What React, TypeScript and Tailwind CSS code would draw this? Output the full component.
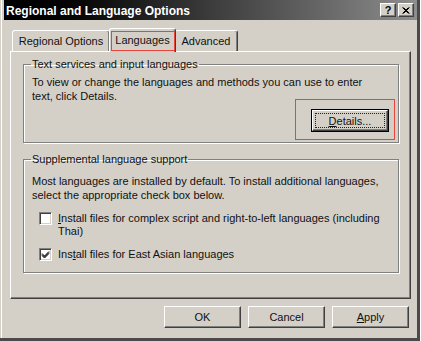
import React from 'react';

// classic 3D edges
const raised =
  'border border-t-white border-l-white border-r-[#404040] border-b-[#404040] shadow-[inset_-1px_-1px_0_#808080]';
const etched = 'border border-[#808080] shadow-[1px_1px_0_#ffffff,inset_1px_1px_0_#ffffff]';

function PushButton({ children }: { children: React.ReactNode }) {
  return (
    <div className={`w-[77px] h-[22px] flex items-center justify-center bg-[#d4d0c8] ${raised}`}>
      {children}
    </div>
  );
}

function Checkbox({ checked }: { checked: boolean }) {
  return (
    <div className="w-[13px] h-[13px] shrink-0 bg-white border border-t-[#808080] border-l-[#808080] border-r-white border-b-white shadow-[inset_1px_1px_0_#404040,inset_-1px_-1px_0_#d4d0c8] flex items-center justify-center">
      {checked && (
        <svg width="9" height="9" viewBox="0 0 9 9">
          <path d="M1 3.5 L3.5 6 L8 1.5 M1 4.5 L3.5 7 L8 2.5 M1 5.5 L3.5 8 L8 3.5" stroke="#000" strokeWidth="1" fill="none" />
        </svg>
      )}
    </div>
  );
}

function TitleButton({ children }: { children: React.ReactNode }) {
  return (
    <div className={`w-[16px] h-[14px] flex items-center justify-center bg-[#d4d0c8] ${raised}`}>
      {children}
    </div>
  );
}

export default function App() {
  return (
    <div className="w-[421px] h-[341px] bg-white font-['Liberation_Sans',Arial,sans-serif] text-[11px] leading-[14px] text-[#111]">
      <div className="w-[420px] h-[341px] bg-[#d4d0c8] flex flex-col pl-[4px] border-r-[3px] border-r-[#4a4a4a] border-b-[3px] border-b-[#4a4a4a] shadow-[inset_1px_0_0_#d4d0c8,inset_2px_0_0_#ffffff]">
        {/* title bar */}
        <div className="h-[20px] shrink-0 flex items-center pl-[2px] pr-[3px] bg-gradient-to-r from-black via-[#3c3c3c] to-[#8e8e8e]">
          <span className="flex-1 text-white font-bold text-[12px] leading-[14px] pt-[1px]">
            Regional and Language Options
          </span>
          <div className="flex gap-[2px]">
            <TitleButton>
              <span className="font-bold text-[11px] leading-none text-black">?</span>
            </TitleButton>
            <TitleButton>
              <svg width="8" height="7" viewBox="0 0 8 7">
                <path d="M0.5 0.5 L6.5 6.5 M1.5 0.5 L7.5 6.5 M6.5 0.5 L0.5 6.5 M7.5 0.5 L1.5 6.5" stroke="#000" strokeWidth="1" />
              </svg>
            </TitleButton>
          </div>
        </div>

        <div className="flex-1 flex flex-col pt-[8px] pl-[6px] pr-[6px]">
          {/* tabs */}
          <div className="flex items-end pl-[2px] h-[23px]">
            <div className="w-[98px] h-[21px] flex items-center justify-center border-t border-l border-t-white border-l-white border-r border-r-[#404040] rounded-t-[3px] shadow-[inset_-1px_0_0_#808080]">
              Regional Options
            </div>
            <div className="relative z-10 w-[67px] h-[24px] -mx-[1px] -mb-[1px] bg-[#d4d0c8] flex items-center justify-center border-t border-l border-t-white border-l-white border-r border-r-[#404040] rounded-t-[3px] shadow-[inset_-1px_0_0_#808080] pb-[2px]">
              Languages
              <span className="absolute top-[2px] left-[1px] right-0 bottom-[1px] border-[1.5px] border-[#e8453c]" />
            </div>
            <div className="w-[63px] h-[21px] flex items-center justify-center border-t border-t-white border-r border-r-[#404040] rounded-t-[3px] shadow-[inset_-1px_0_0_#808080]">
              Advanced
            </div>
          </div>

          {/* panel */}
          <div className={`h-[248px] flex flex-col pt-[6px] pl-[12px] pr-[11px] ${raised}`}>
            <fieldset className={`flex flex-col pl-[8px] pr-[9px] pb-[10px] ${etched}`}>
              <legend className="-ml-[1px] px-[1px] leading-[13px]">Text services and input languages</legend>
              <p className="mt-[4px] whitespace-nowrap">
                To view or change the languages and methods you can use to enter
                <br />
                text, click Details.
              </p>
              <div className="self-end relative mt-[6px]">
                <div className="w-[78px] h-[23px] border border-black">
                  <div className={`h-full p-[2px] bg-[#d4d0c8] ${raised}`}>
                    <div className="h-full flex items-center justify-center border border-dotted border-[#222]">
                      <span>
                        <span className="underline">D</span>etails...
                      </span>
                    </div>
                  </div>
                </div>
                <span className="absolute -left-[16px] -top-[10px] -right-[6px] -bottom-[8px] border-[1.5px] border-[#e8453c]" />
              </div>
            </fieldset>

            <fieldset className={`mt-[10px] flex flex-col pl-[8px] pr-[9px] pb-[11px] ${etched}`}>
              <legend className="-ml-[1px] px-[1px] leading-[13px]">Supplemental language support</legend>
              <p className="mt-[8px] whitespace-nowrap">
                Most languages are installed by default. To install additional languages,
                <br />
                select the appropriate check box below.
              </p>
              <div className="mt-[10px] flex flex-col gap-[10px] pl-[7px] leading-[13px]">
                <div className="flex items-start gap-[6px]">
                  <Checkbox checked={false} />
                  <span className="whitespace-nowrap">
                    <span className="underline">I</span>nstall files for complex script and right-to-left languages (including
                    <br />
                    Thai)
                  </span>
                </div>
                <div className="flex items-start gap-[6px]">
                  <Checkbox checked={true} />
                  <span className="whitespace-nowrap">
                    Ins<span className="underline">t</span>all files for East Asian languages
                  </span>
                </div>
              </div>
            </fieldset>
          </div>

          {/* dialog buttons */}
          <div className="mt-[7px] flex justify-end gap-[7px] pr-[2px]">
            <PushButton>OK</PushButton>
            <PushButton>Cancel</PushButton>
            <PushButton>
              <span>
                <span className="underline">A</span>pply
              </span>
            </PushButton>
          </div>
        </div>
      </div>
    </div>
  );
}
